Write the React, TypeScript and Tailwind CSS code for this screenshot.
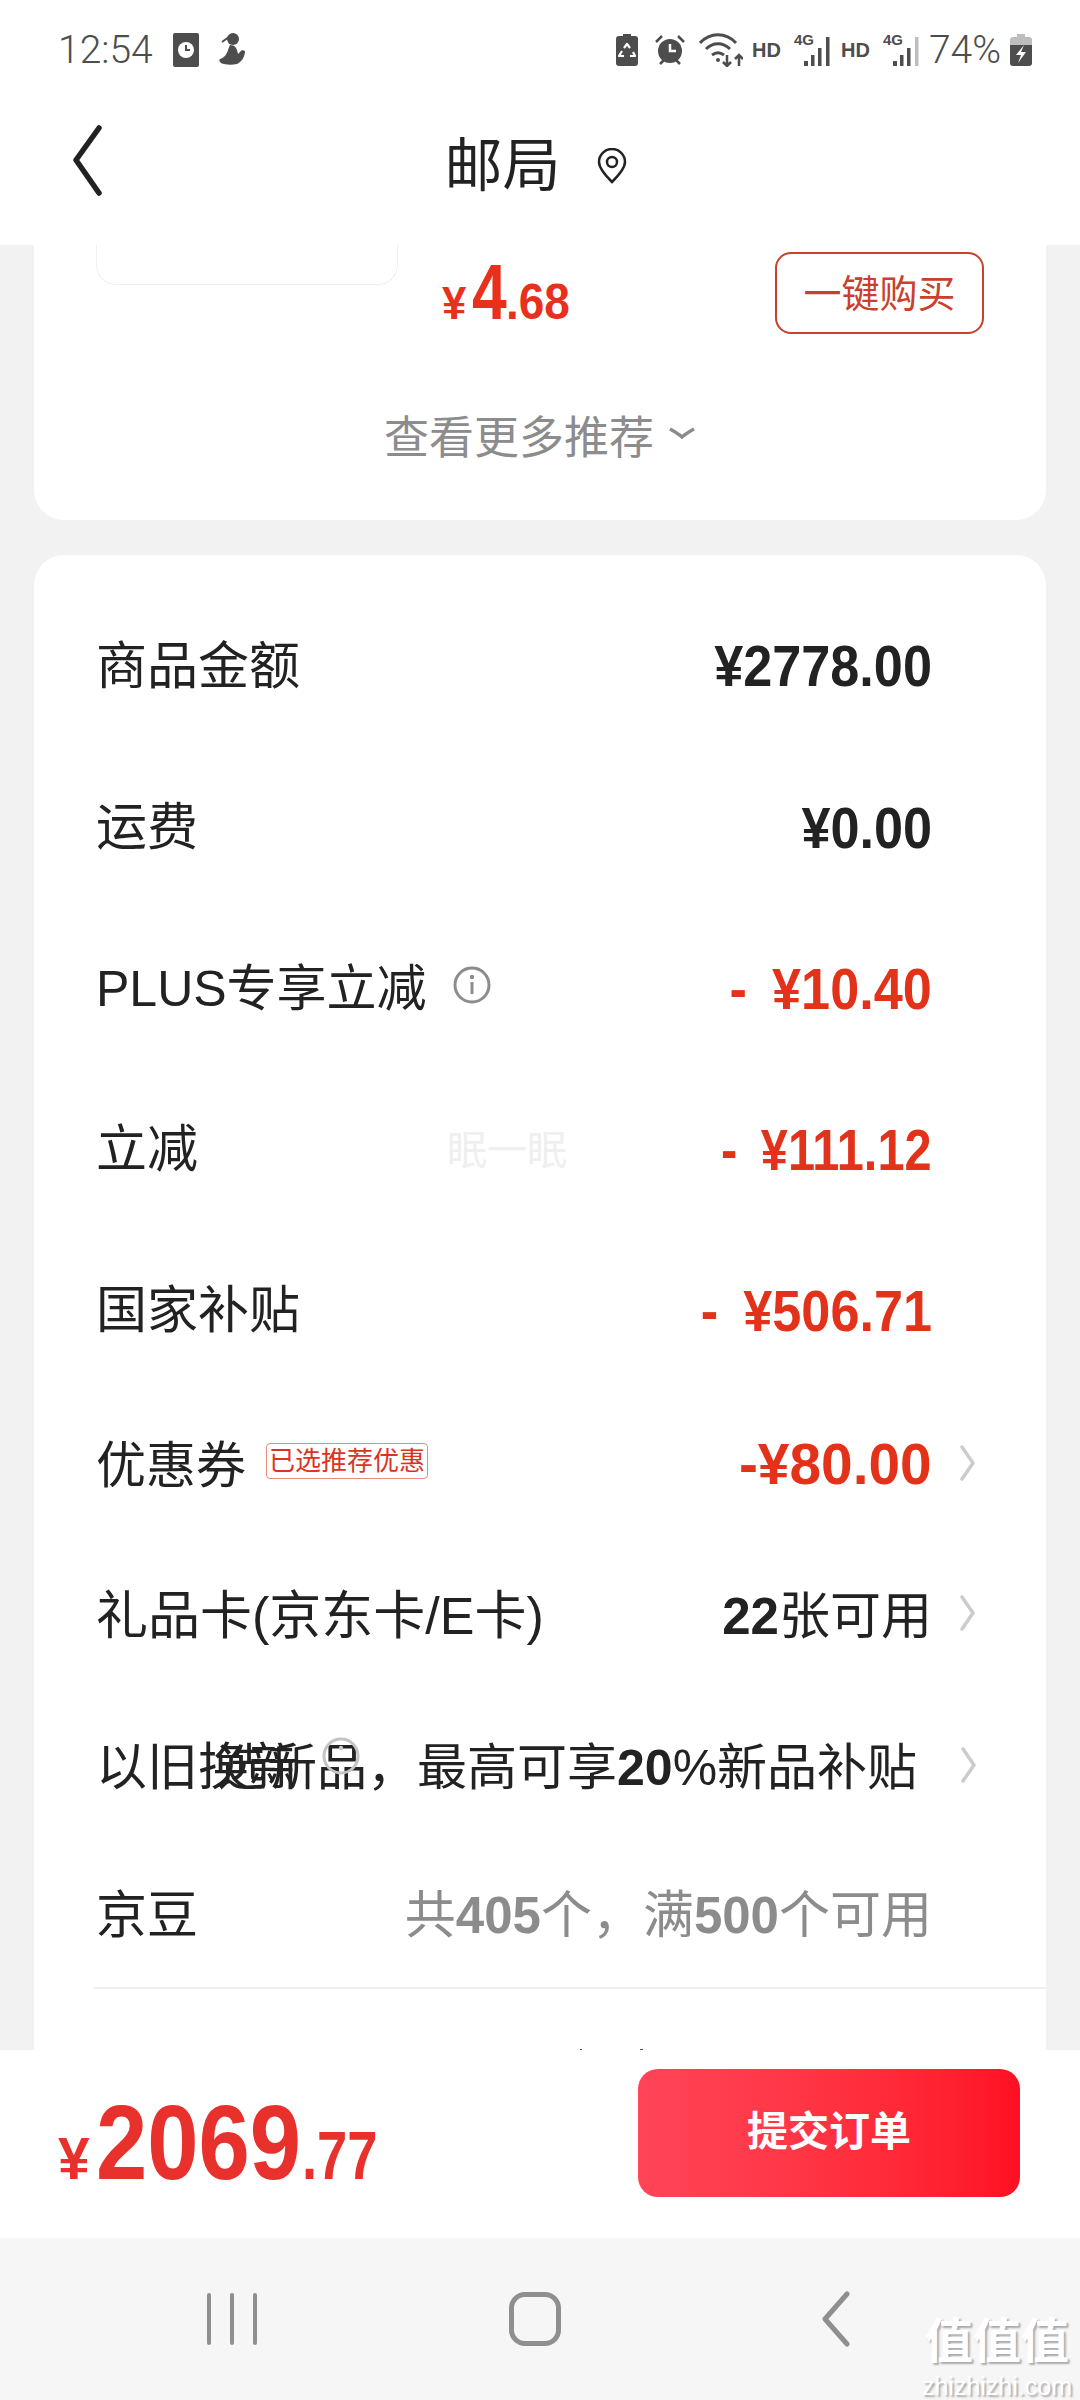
const cjk = "font-['Liberation_Sans','Noto_Sans_CJK_SC',sans-serif]";
const label = "shrink-0 whitespace-nowrap text-[51px] leading-none text-[#222222]";

const Row = ({ h, children }: { h: string; children: React.ReactNode }) => (
  <div className={`flex items-center justify-between pl-[62px] pr-[34px] ${h}`}>{children}</div>
);

const Chevron = () => (
  <svg width="16" height="36" viewBox="0 0 16 36" fill="none" className="ml-[28px] mr-[36px] mt-[-6px] shrink-0">
    <path d="M2 2l11 16L2 34" stroke="#cccccc" strokeWidth="3.5" strokeLinecap="round" strokeLinejoin="round" />
  </svg>
);

const Amount = ({ text, minus, narrow }: { text: string; minus?: boolean; narrow?: boolean }) => (
  <div
    className={`mr-[80px] origin-right whitespace-nowrap text-[58px] font-bold leading-none ${
      narrow ? "scale-x-[0.84]" : "scale-x-[0.9]"
    } ${minus ? "text-[#e2321a]" : "text-[#222222]"}`}
  >
    {minus && <span className="mr-[28px]">-</span>}
    {text}
  </div>
);

const StatusBar = () => (
  <div className="flex h-[100px] items-center justify-between pl-[58px] pr-[48px] text-[#4d4d4d]">
    <div className="flex items-center">
      <span className="font-['Roboto',sans-serif] text-[39px] font-light leading-none">12:54</span>
      <svg width="26" height="34" viewBox="0 0 26 34" className="ml-[20px]">
        <rect width="26" height="34" rx="2" fill="#4d4d4d" />
        <circle cx="13" cy="17" r="8" fill="#fff" />
        <path d="M13 12v5h4" stroke="#4d4d4d" strokeWidth="2" fill="none" />
      </svg>
      <svg width="26" height="36" viewBox="0 0 26 36" className="ml-[20px]">
        <circle cx="14" cy="7" r="6" fill="#4d4d4d" />
        <path d="M11 13c5 0 7 3 8 9l4-4 3 1c0 5-3 11-8 13-5 1-12 1-16-1-2-2-2-3-1-4 4-1 7-5 8-9z" fill="#4d4d4d" />
        <path d="M10 5L3 10" stroke="#4d4d4d" strokeWidth="2" />
      </svg>
    </div>
    <div className="flex items-center">
      <svg width="22" height="32" viewBox="0 0 22 32">
        <path d="M7 0h8v2h4a3 3 0 013 3v24a3 3 0 01-3 3H3a3 3 0 01-3-3V5a3 3 0 013-3h4z" fill="#4d4d4d" />
        <path d="M8 14l3-4 3 4M17 18l2 4h-5M8 22H3l3-5" stroke="#fff" strokeWidth="2.2" fill="none" strokeLinejoin="round" />
      </svg>
      <svg width="30" height="32" viewBox="0 0 30 32" className="ml-[17px]">
        <circle cx="15" cy="17" r="12" fill="#4d4d4d" />
        <path d="M15 10v7h6" stroke="#fff" strokeWidth="2.5" fill="none" />
        <path d="M1 8l6-6M29 8l-6-6M5 30l4-4M25 30l-4-4" stroke="#4d4d4d" strokeWidth="2.5" />
      </svg>
      <svg width="44" height="34" viewBox="0 0 44 34" fill="none" stroke="#4d4d4d" strokeWidth="3" className="ml-[14px]">
        <path d="M1 10c10-11 26-11 36 0" />
        <path d="M7 16c7-7 17-7 24 0" />
        <path d="M13 22c4-3 8-3 12 0" />
        <circle cx="19" cy="27" r="2" fill="#4d4d4d" stroke="none" />
        <path d="M28 22v11M24 29l4 4 4-4M40 33V22M36 26l4-4 4 4" strokeWidth="2.5" />
      </svg>
      <span className="ml-[9px] text-[20px] font-bold leading-none">HD</span>
      <div className="relative ml-[13px] h-[34px] w-[38px]">
        <span className="absolute left-0 top-[-1px] text-[15px] font-bold leading-none">4G</span>
        <svg width="38" height="34" viewBox="0 0 38 34" fill="#4d4d4d">
          <rect x="10" y="28" width="4" height="5" />
          <rect x="17" y="22" width="3.5" height="11" />
          <rect x="24" y="15" width="3.5" height="18" />
          <rect x="32" y="4" width="3.5" height="29" />
        </svg>
      </div>
      <span className="ml-[9px] text-[20px] font-bold leading-none">HD</span>
      <div className="relative ml-[13px] h-[34px] w-[38px]">
        <span className="absolute left-0 top-[-1px] text-[15px] font-bold leading-none">4G</span>
        <svg width="38" height="34" viewBox="0 0 38 34" fill="#4d4d4d">
          <rect x="10" y="28" width="4" height="5" />
          <rect x="17" y="22" width="3.5" height="11" />
          <rect x="24" y="15" width="3.5" height="18" />
          <rect x="32" y="4" width="3.5" height="29" fill="#bdbdbd" />
        </svg>
      </div>
      <span className="ml-[8px] font-['Roboto',sans-serif] text-[39px] font-light leading-none">74%</span>
      <svg width="22" height="32" viewBox="0 0 22 32" className="ml-[9px]">
        <path d="M7 0h8v3h4a3 3 0 013 3v8H0V6a3 3 0 013-3h4z" fill="#bdbdbd" />
        <path d="M0 11h22v18a3 3 0 01-3 3H3a3 3 0 01-3-3z" fill="#4d4d4d" />
        <path d="M14 11l-8 10h5l-3 8 8-11h-5z" fill="#fff" />
      </svg>
    </div>
  </div>
);

const Header = () => (
  <div className="relative flex h-[145px] items-center justify-center bg-white pb-[14px] pr-[8px]">
    <svg width="36" height="72" viewBox="0 0 36 72" fill="none" className="absolute left-[70px] top-[25px]">
      <path d="M29 3L6 35l23 33" stroke="#222222" strokeWidth="5.5" strokeLinecap="round" strokeLinejoin="round" />
    </svg>
    <span className="text-[58px] leading-none text-[#222222]">邮局</span>
    <svg width="32" height="36" viewBox="0 0 32 36" fill="none" stroke="#222222" strokeWidth="2.5" className="ml-[35px]">
      <path d="M16 34C8 26 3 20 3 14a13 13 0 0126 0c0 6-5 12-13 20z" />
      <circle cx="16" cy="14" r="5" />
    </svg>
  </div>
);

const BottomBar = () => (
  <div className="flex h-[188px] items-start justify-between bg-white pl-[58px] pr-[60px] pt-[19px]">
    <div className="mt-[20px] flex items-baseline whitespace-nowrap font-bold text-[#e8302c]">
      <span className="inline-block w-[38px] origin-left scale-x-[0.95] text-[60px] leading-none">¥</span>
      <span className="inline-block w-[206px] origin-left scale-x-[0.87] text-[106px] leading-none">2069</span>
      <span className="inline-block w-[75px] origin-left scale-x-[0.8] text-[68px] leading-none">.77</span>
    </div>
    <div className="flex h-[128px] w-[382px] items-center justify-center rounded-[20px] bg-gradient-to-r from-[#ff4558] to-[#ff0f23] text-[41px] font-bold text-white">
      提交订单
    </div>
  </div>
);

const NavBar = () => (
  <div className="relative flex h-[162px] items-center bg-[#f6f6f6]">
    <div className="ml-[207px] flex h-[52px] w-[50px] justify-between">
      <div className="w-[4px] rounded-full bg-[#8f8f8f]" />
      <div className="w-[4px] rounded-full bg-[#8f8f8f]" />
      <div className="w-[4px] rounded-full bg-[#8f8f8f]" />
    </div>
    <div className="ml-[252px] h-[54px] w-[52px] rounded-[16px] border-[5px] border-[#8f8f8f]" />
    <svg width="32" height="56" viewBox="0 0 32 56" fill="none" className="ml-[258px]">
      <path d="M28 3L6 28l22 25" stroke="#8f8f8f" strokeWidth="5" strokeLinecap="round" strokeLinejoin="round" />
    </svg>
    {/* 图片站水印，压在导航栏右下角 */}
    <div className="absolute right-[8px] top-[80px] flex flex-col items-center text-white [text-shadow:2px_2px_2px_#a8a8a8]">
      <span className="text-[48px] font-bold leading-none">值值值</span>
      <span className="mt-[8px] text-[25px] leading-none">zhizhizhi.com</span>
    </div>
  </div>
);

export default function App() {
  return (
    <div className={`flex h-[2400px] w-[1080px] flex-col overflow-hidden bg-white ${cjk}`}>
      <StatusBar />
      <Header />
      <div className="flex min-h-0 flex-1 flex-col gap-[35px] overflow-hidden bg-[#f2f2f2] px-[34px]">
        <div className="h-[275px] shrink-0 rounded-b-[30px] bg-white">
          <div className="flex pl-[62px] pr-[62px]">
            <div className="h-[40px] w-[302px] rounded-b-[20px] border border-t-0 border-[#f0f0f0]" />
            <div className="ml-[44px] mt-[8px] flex h-[86px] items-baseline whitespace-nowrap font-bold text-[#e8301c]">
              <span className="inline-block w-[30px] origin-left scale-x-[0.95] text-[46px] leading-none">¥</span>
              <span className="inline-block w-[34px] origin-left scale-x-[0.8] text-[78px] leading-none">4</span>
              <span className="inline-block w-[64px] origin-left scale-x-[0.92] text-[50px] leading-none">.68</span>
            </div>
            <div className="ml-auto mt-[7px] flex h-[82px] w-[209px] items-center justify-center rounded-[16px] border-2 border-[#c9402d] pt-[3px] text-[38px] text-[#c9402d]">
              一键购买
            </div>
          </div>
          <div className="mt-[66px] flex items-center justify-center text-[45px] text-[#8c8c8c]">
            查看更多推荐
            <svg width="28" height="14" viewBox="0 0 28 14" fill="none" className="ml-[14px] mt-[-12px]">
              <path d="M2 3c6 3 8 5 12 8 4-3 6-5 12-8" stroke="#8c8c8c" strokeWidth="3.5" />
            </svg>
          </div>
        </div>
        <div className="relative shrink-0 rounded-t-[30px] bg-white">
          <div className="h-[30px]" />
          <Row h="h-[162px]">
            <span className={label}>商品金额</span>
            <Amount text="¥2778.00" />
          </Row>
          <Row h="h-[161px]">
            <span className={label}>运费</span>
            <Amount text="¥0.00" />
          </Row>
          <Row h="h-[161px]">
            <div className="flex items-center">
              <span className="whitespace-nowrap text-[50px] leading-none text-[#222222]">PLUS专享立减</span>
              <svg width="38" height="38" viewBox="0 0 38 38" fill="none" className="ml-[26px] mt-[-8px]">
                <circle cx="19" cy="19" r="17" stroke="#8c8c8c" strokeWidth="3" />
                <circle cx="19" cy="11" r="2.2" fill="#8c8c8c" />
                <path d="M19 16v12" stroke="#8c8c8c" strokeWidth="3" />
              </svg>
            </div>
            <Amount text="¥10.40" minus />
          </Row>
          <Row h="h-[161px]">
            <span className={label}>立减</span>
            <Amount text="¥111.12" minus narrow />
          </Row>
          <Row h="h-[161px]">
            <span className={label}>国家补贴</span>
            <Amount text="¥506.71" minus />
          </Row>
          <Row h="h-[150px]">
            <div className="flex items-center">
              <span className="text-[50px] leading-none text-[#222222]">优惠券</span>
              <span className="ml-[20px] mt-[-10px] rounded-[4px] border border-[#e88a7c] px-[2px] text-[26px] leading-[34px] text-[#d9341f]">
                已选推荐优惠
              </span>
            </div>
            <div className="flex items-center">
              <span className="mt-[-4px] origin-right scale-x-[0.98] text-[58px] font-bold leading-none text-[#e2321a]">-¥80.00</span>
              <Chevron />
            </div>
          </Row>
          <Row h="h-[150px]">
            <span className="shrink-0 whitespace-nowrap text-[52px] leading-none text-[#222222]">礼品卡(京东卡/E卡)</span>
            <div className="flex items-center">
              <span className={label}>
                <span className="font-bold">22</span>张可用
              </span>
              <Chevron />
            </div>
          </Row>
          <Row h="h-[153px]">
            {/* 原图这一行就是两段文字叠在一起 */}
            <span className={`${label} w-[121px]`}>以旧换新</span>
            <div className="flex shrink-0 items-center">
              <span className="whitespace-nowrap text-[50px] leading-none text-[#222222]">
                选新品，最高可享<span className="font-bold">20</span>%新品补贴
              </span>
              <div className="w-[16px]" />
              <Chevron />
            </div>
          </Row>
          <Row h="h-[143px]">
            <span className={label}>京豆</span>
            <span className="mr-[80px] whitespace-nowrap text-[51px] leading-none text-[#8c8c8c]">
              共<span className="font-bold">405</span>个，满<span className="font-bold">500</span>个可用
            </span>
          </Row>
          <div className="ml-[60px] h-[2px] bg-[#f0f0f0]" />
          <div className="h-[60px]" />
          <div className="flex h-[200px]">
            <div className="ml-[546px] h-[5px] w-[2px] bg-[#555555]" />
            <div className="ml-[58px] h-[5px] w-[3px] bg-[#555555]" />
          </div>
          {/* 屏幕上浮着的淡水印和叠影图标 */}
          <div className="absolute left-[413px] top-[575px] text-[40px] leading-none text-[#efefef]">眠一眠</div>
          <svg width="38" height="38" viewBox="0 0 38 38" fill="none" className="absolute left-[288px] top-[1182px]">
            <circle cx="19" cy="19" r="17" stroke="#c4c4c4" strokeWidth="3" />
            <circle cx="19" cy="11" r="2.2" fill="#c4c4c4" />
          </svg>
        </div>
      </div>
      <BottomBar />
      <NavBar />
    </div>
  );
}
